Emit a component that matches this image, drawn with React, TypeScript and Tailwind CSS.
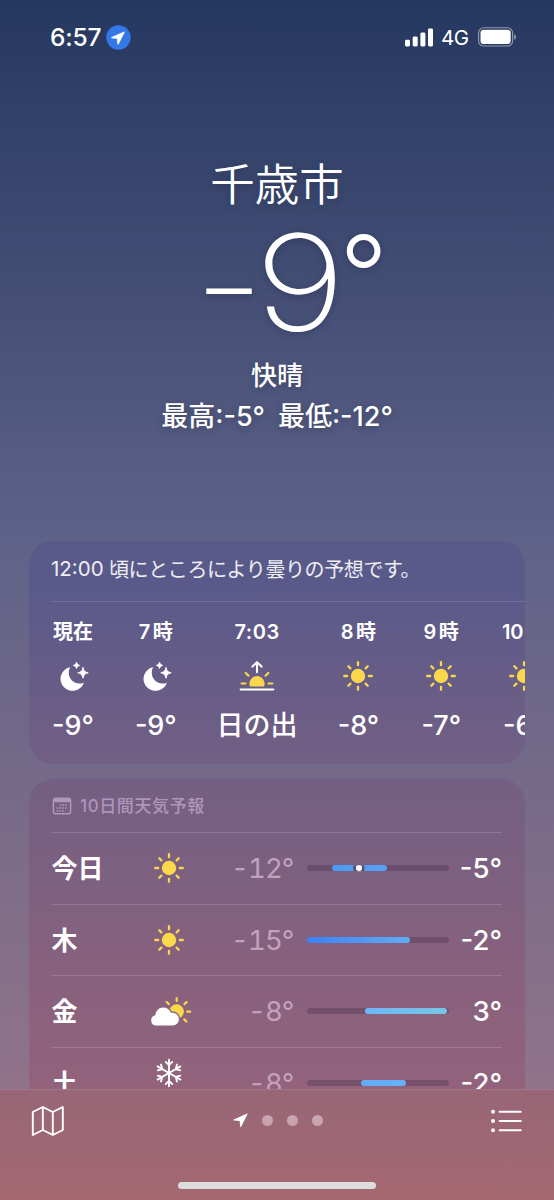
import type { ReactNode } from "react";

const hours = [
  { time: "現在", icon: "moon", value: "-9°" },
  { time: "7", unit: "時", icon: "moon", value: "-9°" },
  { time: "7:03", icon: "sunrise", value: "日の出" },
  { time: "8", unit: "時", icon: "sun", value: "-8°" },
  { time: "9", unit: "時", icon: "sun", value: "-7°" },
  { time: "10", unit: "時", icon: "sun", value: "-6°" },
];

const days = [
  { day: "今日", icon: "sun", low: "-12°", high: "-5°", from: 25, to: 80.5, dot: 52, color: "linear-gradient(90deg,#4c9af3,#57a2f5)" },
  { day: "木", icon: "sun", low: "-15°", high: "-2°", from: 0, to: 103.5, color: "linear-gradient(90deg,#3b82f4,#64abf4)" },
  { day: "金", icon: "cloud", low: "-8°", high: "3°", from: 58.5, to: 140.5, color: "linear-gradient(90deg,#6fb5f5,#79c5e6)" },
  { day: "土", icon: "snow", low: "-8°", high: "-2°", from: 54, to: 99.5, color: "linear-gradient(90deg,#62acf6,#68b0f6)" },
];

const cloud =
  "M8.2 30.5a5.2 5.2 0 0 1-.8-10.3C7.6 16 11 12.5 15.3 12.5c3.6 0 6.5 2 7.6 5.2 4.6-.5 8 2.4 8 6.4s-2.8 6.4-6.6 6.4Z";

function Sun() {
  return (
    <svg width="32" height="32" viewBox="0 0 32 32" fill="none" className="shrink-0">
      <circle cx="16" cy="16" r="7.2" fill="#fbd84b" />
      <g stroke="#fbd84b" strokeWidth="2.3" strokeLinecap="round">
        <path d="M16 2.2v3M16 26.8v3M2.2 16h3M26.8 16h3" />
        <path d="m6.3 6.3 2.1 2.1M23.6 23.6l2.1 2.1M6.3 25.7l2.1-2.1M23.6 8.4l2.1-2.1" />
      </g>
    </svg>
  );
}

function Moon() {
  return (
    <svg width="32" height="32" viewBox="0 0 32 32" fill="#fff" className="shrink-0">
      <path d="M12.3 7.3A12 12 0 1 0 26.9 22.7C18 26.5 8.5 18 12.8 7.8Q13 7 12.3 7.3Z" />
      <path d="M26 7.4Q26.6 12.2 31.2 12.8Q26.6 13.4 26 18.2Q25.4 13.4 20.8 12.8Q25.4 12.2 26 7.4Z" stroke="#fff" strokeWidth="1" strokeLinejoin="round" />
      <path d="M19.5 2.2Q19.9 5 22.6 5.4Q19.9 5.8 19.5 8.6Q19.1 5.8 16.4 5.4Q19.1 5 19.5 2.2Z" stroke="#fff" strokeWidth=".8" strokeLinejoin="round" />
    </svg>
  );
}

function Sunrise() {
  return (
    <svg width="38" height="32" viewBox="0 0 38 32" fill="none" strokeLinecap="round" className="shrink-0">
      <path d="M11.9 26.4a7.6 7.6 0 1 1 14.2 0Z" fill="#fbd84b" />
      <path d="M3.6 23.5h4M30.4 23.5h4M7.7 12.9l2.8 2.8M30.3 12.9l-2.8 2.8" stroke="#fbd84b" strokeWidth="2.1" />
      <path d="M19 12.2V2.6M14.4 6.6 19 2.2l4.6 4.4M2.6 29.5h32.8" stroke="#fff" strokeWidth="2.1" strokeLinejoin="round" />
    </svg>
  );
}

function CloudSun() {
  return (
    <svg width="42" height="32" viewBox="0 0 42 32" fill="none" className="shrink-0 overflow-visible">
      <mask id="behind-cloud">
        <rect width="42" height="32" fill="#fff" />
        <path d={cloud} fill="#000" stroke="#000" strokeWidth="2.6" />
      </mask>
      <circle cx="28.6" cy="16.6" r="7.3" fill="#fbd84b" mask="url(#behind-cloud)" />
      <path d="M28.7 3.2v2.8M39.2 16.7h3M18.7 7l2.2 2.1M38.6 7l-2.1 2.1M36.3 24.4l2.1 2.1" stroke="#fbd84b" strokeWidth="2.2" strokeLinecap="round" />
      <path d={cloud} fill="#fff" />
    </svg>
  );
}

function Snow() {
  const arms = [0, 60, 120, 180, 240, 300];
  return (
    <svg width="32" height="32" viewBox="0 0 32 32" fill="none" stroke="#fff" strokeWidth="1.9" strokeLinecap="round" strokeLinejoin="round" className="mb-5 shrink-0">
      {arms.map((a) => (
        <path key={a} d="M16 16V2.8M12.7 4.9l3.3 3.2 3.3-3.2" transform={`rotate(${a} 16 16)`} />
      ))}
    </svg>
  );
}

const icons: Record<string, ReactNode> = {
  sun: <Sun />,
  moon: <Moon />,
  sunrise: <Sunrise />,
  cloud: <CloudSun />,
  snow: <Snow />,
};

function StatusBar() {
  return (
    <header className="flex h-[74px] shrink-0 items-center pl-[50px] pr-[38px]">
      <span className="w-[56px] pt-px text-[24.5px] font-medium tracking-[-0.2px]">6:57</span>
      <svg width="25" height="25" viewBox="0 0 25 25">
        <circle cx="12.5" cy="12.5" r="12.2" fill="#3478e8" />
        <path d="M18.2 6.8 5.8 12.2q-.9.6 0 .9l5.4.4.4 5.5q.4.9.9 0L18.4 7.2q.1-.5-.2-.4Z" fill="#fff" stroke="#fff" strokeWidth=".5" />
      </svg>
      <div className="ml-auto flex items-center">
        <svg width="28" height="19" viewBox="0 0 28 19" fill="#fff">
          <rect x="0" y="11.8" width="5" height="6.7" rx="1.4" />
          <rect x="7.7" y="8.6" width="5" height="9.9" rx="1.4" />
          <rect x="15.4" y="4.6" width="5" height="13.9" rx="1.4" />
          <rect x="23" y="0.5" width="5" height="18" rx="1.4" />
        </svg>
        <span className="ml-[8px] w-[37px] pt-[2px] text-[20.5px] tracking-[-0.5px]">4G</span>
        <svg width="38" height="20" viewBox="0 0 38 20" fill="none">
          <rect x=".6" y=".8" width="34" height="18.2" rx="5" stroke="#fff" strokeOpacity=".5" strokeWidth="1.1" />
          <rect x="2.5" y="2.7" width="30.2" height="14.4" rx="3.4" fill="#fff" />
          <path d="M36.2 7v6q1.8-1 1.8-3t-1.8-3Z" fill="#fff" fillOpacity=".5" />
        </svg>
      </div>
    </header>
  );
}

function Summary() {
  return (
    <section className="flex h-[467px] shrink-0 flex-col items-center pt-[85px] [text-shadow:0_2px_7px_rgba(20,25,60,0.3)]">
      <h1 className="h-[55px] text-[44.5px] font-[350] leading-[52px]">千歳市</h1>
      <div className="flex h-[134px] items-center pl-[32px] text-[134px] font-extralight leading-[134px]">
        <span className="mr-[13px] flex w-[46px] translate-y-[3px] scale-x-[1.18] justify-center">-</span>
        <span className="mr-[12px] flex w-[70px] translate-y-px scale-x-[1.16] justify-center">9</span>
        <span className="flex w-[33px] -translate-y-[7px] justify-center text-[106px] font-light">°</span>
      </div>
      <p className="mt-[7px] text-[26px] font-medium leading-[41px]">快晴</p>
      <p className="flex gap-[13px] text-[27px] font-medium leading-[41px]">
        <span>最高:-5°</span>
        <span>最低:-12°</span>
      </p>
    </section>
  );
}

function HourlyCard() {
  return (
    <section className="h-[223px] shrink-0 overflow-hidden rounded-[24px] bg-linear-to-b from-[#59598a] from-15% to-[#725f84] pl-[22px]">
      <p className="flex h-[61px] items-center border-b border-white/15 pb-[3px] text-[20px] text-white/90">
        <span className="w-[58px] text-[20.5px]">12:00</span>
        <span className="whitespace-nowrap tracking-[-0.4px]">頃にところにより曇りの予想です。</span>
      </p>
      <div className="flex gap-[41.8px] pl-[1.5px]">
        {hours.map((h, i) => (
          <div key={i} className={`${h.icon === "sunrise" ? "w-[78px]" : "w-[41px]"} flex shrink-0 flex-col items-center whitespace-nowrap`}>
            <span className="mt-[15px] flex gap-[2.5px] text-[20px] font-semibold leading-[30px]">
              <span className={h.icon === "sunrise" ? "tracking-[0.5px]" : ""}>{h.time}</span>
              {h.unit && <span>{h.unit}</span>}
            </span>
            <div className="mt-[13px]">{icons[h.icon]}</div>
            <span className="mt-[14px] text-[27px] font-medium leading-[40px]">{h.value}</span>
          </div>
        ))}
      </div>
    </section>
  );
}

function DailyCard() {
  return (
    <section className="mt-[15px] h-[340px] shrink-0 rounded-t-[24px] bg-linear-to-b from-[#735f83] via-[#87617e] via-55% to-[#95637a] pl-[22px] pr-[23px]">
      <h2 className="flex h-[53px] items-center gap-2 pl-px text-[17px] font-medium tracking-[0.6px] text-[#b096b8]">
        <svg width="20" height="18" viewBox="0 0 20 18" fill="none">
          <rect x="1.4" y="1.2" width="17.2" height="15.6" rx="2.6" stroke="currentColor" strokeWidth="1.5" />
          <path d="M1.4 5.2V3.6Q1.4 1.2 3.8 1.2h12.4q2.4 0 2.4 2.4v1.6Z" fill="currentColor" />
          <path d="M7.6 8h8M4.6 11h11M4.6 14h8" stroke="currentColor" strokeWidth="1.6" strokeDasharray="1.7 1.1" />
        </svg>
        <span className="pt-[2px]">10日間天気予報</span>
      </h2>
      {days.map((d) => (
        <div key={d.day} className="flex h-[71.6px] items-center border-t border-white/15 text-[27.5px]">
          <span className="w-[97px] pl-[0.5px] pt-px text-[26px] font-semibold">{d.day}</span>
          <div className="flex w-[42px] justify-center">{icons[d.icon]}</div>
          <span className="w-[103.5px] pt-px text-right tabular-nums tracking-[-0.9px] text-[#c3a1bd]">{d.low}</span>
          <div className="relative ml-[13px] h-[6px] w-[142px] rounded-full bg-[#4d3550]/40">
            <div className="absolute h-[6px] rounded-full" style={{ left: d.from, width: d.to - d.from, background: d.color }} />
            {d.dot && <div className="absolute -top-[3px] size-3 -translate-x-1/2 rounded-full border-3 border-[#684f68] bg-white [clip-path:inset(3px_0)]" style={{ left: d.dot }} />}
          </div>
          <span className="flex-1 pt-px text-right font-medium">{d.high}</span>
        </div>
      ))}
    </section>
  );
}

function TabBar() {
  return (
    <footer className="flex h-[111px] shrink-0 flex-col items-center border-t border-[#a4768a] bg-linear-to-b from-[#986677] to-[#a56872]">
      <div className="flex h-[62px] w-full items-center justify-between pl-[31px] pr-[32px]">
        <svg width="34" height="32" viewBox="0 0 34 32" fill="none" stroke="#fff" strokeWidth="1.9" strokeLinejoin="round">
          <path d="M1.8 7 11.8 2l10 5 10-5v23l-10 5-10-5-10 5ZM11.8 2v23M21.8 7v23" />
        </svg>
        <div className="flex items-center gap-[14px] pr-px pb-[2px]">
          <svg width="15" height="15" viewBox="0 0 15 15" fill="#fff">
            <path d="M14.2.6.8 6.4q-1 .7.1 1l5.7.5.6 5.8q.4 1 1 .1L14.5 1q.2-.6-.3-.4Z" />
          </svg>
          <i className="size-[11px] rounded-full bg-[#c9a4b0]" />
          <i className="size-[11px] rounded-full bg-[#c9a4b0]" />
          <i className="size-[11px] rounded-full bg-[#c9a4b0]" />
        </div>
        <svg width="31" height="24" viewBox="0 0 31 24" fill="none" stroke="#fff" strokeLinecap="round">
          <path d="M8.7 2.8h21M8.7 12h21M8.7 21.2h21" strokeWidth="2.1" />
          <path d="M2 2.8h.01M2 12h.01M2 21.2h.01" strokeWidth="4" />
        </svg>
      </div>
      <div className="mt-[30px] h-[7px] w-[198px] rounded-full bg-[#dddcdc]" />
    </footer>
  );
}

export default function App() {
  return (
    <main className="flex h-[1200px] w-[554px] flex-col overflow-hidden bg-linear-to-b from-[#25385f] via-[#5f6288] via-45% to-[#9b7689] font-['Inter','Noto_Sans_CJK_JP',sans-serif] text-white">
      <div className="flex h-[1089px] shrink-0 flex-col overflow-hidden">
        <StatusBar />
        <Summary />
        <div className="flex flex-col px-[29px]">
          <HourlyCard />
          <DailyCard />
        </div>
      </div>
      <TabBar />
    </main>
  );
}
